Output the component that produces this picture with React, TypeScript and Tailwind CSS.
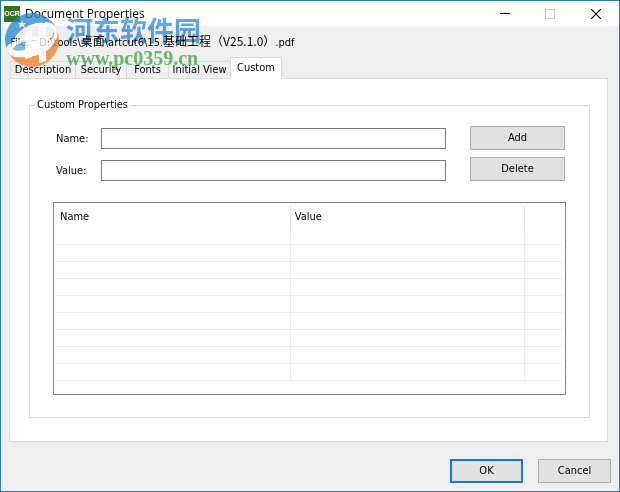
import React, { useState } from 'react';

const TABS = [
    { id: 'description', label: 'Description', width: 'w-[66px]' },
    { id: 'security', label: 'Security', width: 'w-[52px]' },
    { id: 'fonts', label: 'Fonts', width: 'w-[43px]' },
    { id: 'initial-view', label: 'Initial View', width: 'w-[63px]' },
    { id: 'custom', label: 'Custom', width: 'w-[52px]' },
];

const EMPTY_ROWS = Array.from({ length: 9 }, (_, i) => i);

const buttonClass = 'h-6 border border-[#adadad] bg-[#e1e1e1] text-center';

const TitleBar: React.FC = () => (
    <header className="flex h-[25px] items-center bg-white pl-[3px]">
        <span className="mr-[5px] flex h-4 w-4 shrink-0 items-center justify-center bg-[#3c6e22] font-['Liberation_Sans',sans-serif] text-[7px] font-bold text-white">
            OCR
        </span>
        <h1 className="flex-1 font-['Open_Sans',sans-serif] text-[12px] whitespace-nowrap">Document Properties</h1>
        <button aria-label="Minimize" className="flex h-full w-[45px] items-center justify-center">
            <svg width="10" height="10" shapeRendering="crispEdges"><path d="M0 4.5H10" stroke="#000" /></svg>
        </button>
        <button aria-label="Maximize" disabled className="flex h-full w-[45px] items-center justify-center">
            <svg width="10" height="10" shapeRendering="crispEdges"><path d="M.5 .5H9.5V9.5H.5Z" fill="none" stroke="#c4c4c4" /></svg>
        </button>
        <button aria-label="Close" className="flex h-full w-[47px] items-center justify-center">
            <svg width="10" height="10"><path d="M0 0L10 10M10 0L0 10" stroke="#000" strokeWidth="1.2" /></svg>
        </button>
    </header>
);

const PropertiesTable: React.FC = () => (
    <div className="mx-[23px] mt-[21px] border border-[#828790] px-0.5 pt-[3px] pb-[13px]">
        <table className="w-full table-fixed border-collapse">
            <colgroup>
                <col className="w-[46.2%]" />
                <col className="w-[46.2%]" />
                <col />
            </colgroup>
            <thead>
                <tr className="h-[21px] text-left">
                    <th className="border-r border-[#e0e0e0] pl-1 font-normal">Name</th>
                    <th className="border-r border-[#e0e0e0] pl-1 font-normal">Value</th>
                    <th></th>
                </tr>
            </thead>
            <tbody>
                {EMPTY_ROWS.map(row => (
                    <tr key={row} className="h-[17px] border-b border-[#ececec]">
                        <td className="border-r border-[#ececec]"></td>
                        <td className="border-r border-[#ececec]"></td>
                        <td></td>
                    </tr>
                ))}
            </tbody>
        </table>
    </div>
);

const Watermark: React.FC = () => (
    <div aria-hidden="true" className="pointer-events-none absolute top-[11px] left-[3px] flex items-start gap-1.5">
        <svg width="56" height="56" viewBox="4 12 56 56" className="opacity-75">
            <defs>
                <clipPath id="disc"><circle cx="32" cy="40" r="27" /></clipPath>
            </defs>
            <g clipPath="url(#disc)">
                <path d="M4 12H60V29L55 30C50 23 41 21 33 24C20 28 10 39 9 55H4Z" fill="#2286cf" />
                <path d="M60 28V68H14L8 55C27 62 50 53 54 30Z" fill="#f08026" />
                {/* white ring, then the blue field inside it */}
                <path d="M6 51C5 43 20 38 39 36C48 35 52 38 47 43L53 38C57 30 51 24 42 25L46 22C59 23 61 36 52 46C42 58 16 61 6 51Z" fill="#fff" />
                <path d="M12 49C17 43 27 40 41 40C35 48 20 54 12 49Z" fill="#5aabdf" />
                <path d="M25 34L32 30V57L25 59Z" fill="#fff" />
                <path d="M39 27L46 22V61L39 63Z" fill="#fff" />
                <path d="M32 41L39 40V46L32 48Z" fill="#fff" />
            </g>
            <path d="M22 21L23 23L26 23L24 25L25 28L22 26L19 28L20 25L18 23L21 23Z" fill="#fff" />
        </svg>
        <div className="flex flex-col whitespace-nowrap opacity-80 mix-blend-multiply">
            <span className="font-['Noto_Sans_CJK_SC',sans-serif] text-[27px] leading-[36px] font-bold text-[#3394ec]">河东软件园</span>
            <span className="font-['Liberation_Serif',serif] text-[20px] leading-[20px] font-bold text-[#4fb253]">www.pc0359.cn</span>
        </div>
    </div>
);

const App: React.FC = () => {
    const [activeTab, setActiveTab] = useState('custom');
    const [name, setName] = useState('');
    const [value, setValue] = useState('');

    return (
        <div className="relative flex min-h-screen flex-col border border-[#2a7ab9] bg-[#efefef] font-['DejaVu_Sans_Condensed','Noto_Sans_CJK_SC',sans-serif] text-[11px] leading-4 text-black">
            <TitleBar />
            <p className="mt-[7px] h-4 pl-[9px] whitespace-nowrap">
                File: &nbsp; D:\tools\
                <span className="font-['Noto_Sans_CJK_SC',sans-serif] text-[12px]">桌面</span>
                \artcut6\15.
                <span className="font-['Noto_Sans_CJK_SC',sans-serif] text-[12px]">基础工程（V25.1.0）</span>
                .pdf
            </p>

            <main className="mx-2 mt-2 flex flex-1 flex-col">
                <div role="tablist" className="-mb-px flex items-end pl-px">
                    {TABS.map(tab => (
                        <button
                            key={tab.id}
                            role="tab"
                            aria-selected={activeTab === tab.id}
                            onClick={() => setActiveTab(tab.id)}
                            className={`${tab.width} -mr-px border border-[#d9d9d9] text-center whitespace-nowrap ${
                                activeTab === tab.id ? 'relative h-[22px] border-b-white bg-white' : 'h-[18px] bg-[#f0f0f0]'
                            }`}
                        >
                            {tab.label}
                        </button>
                    ))}
                </div>

                <section role="tabpanel" className="mr-[3px] flex flex-1 flex-col border border-[#dcdcdc] bg-white pt-[18px] pr-[17px] pb-[23px] pl-[19px]">
                    <fieldset className="flex-1 border border-[#dcdcdc] pb-[22px]">
                        <legend className="ml-[5px] px-0.5">Custom Properties</legend>
                        <div className="mt-[13px] flex pr-6 pl-[26px]">
                            <div className="flex flex-1 flex-col gap-[11px] pt-0.5">
                                <div className="flex items-center">
                                    <label htmlFor="name" className="w-[45px]">Name:</label>
                                    <input id="name" value={name} onChange={e => setName(e.target.value)} className="h-[21px] min-w-0 flex-1 border border-[#7a7a7a] bg-white px-1" />
                                </div>
                                <div className="flex items-center">
                                    <label htmlFor="value" className="w-[45px]">Value:</label>
                                    <input id="value" value={value} onChange={e => setValue(e.target.value)} className="h-[21px] min-w-0 flex-1 border border-[#7a7a7a] bg-white px-1" />
                                </div>
                            </div>
                            <div className="ml-6 flex w-[95px] flex-col gap-[7px]">
                                <button className={buttonClass}>Add</button>
                                <button className={buttonClass}>Delete</button>
                            </div>
                        </div>
                        <PropertiesTable />
                    </fieldset>
                </section>
            </main>

            <footer className="flex justify-end gap-[15px] px-2 pt-[17px] pb-2">
                <button className="h-6 w-[73px] border-2 border-[#1a78c4] bg-[#e1e1e1] text-center">OK</button>
                <button className={`${buttonClass} w-[73px]`}>Cancel</button>
            </footer>
            <Watermark />
        </div>
    );
};

export default App;
